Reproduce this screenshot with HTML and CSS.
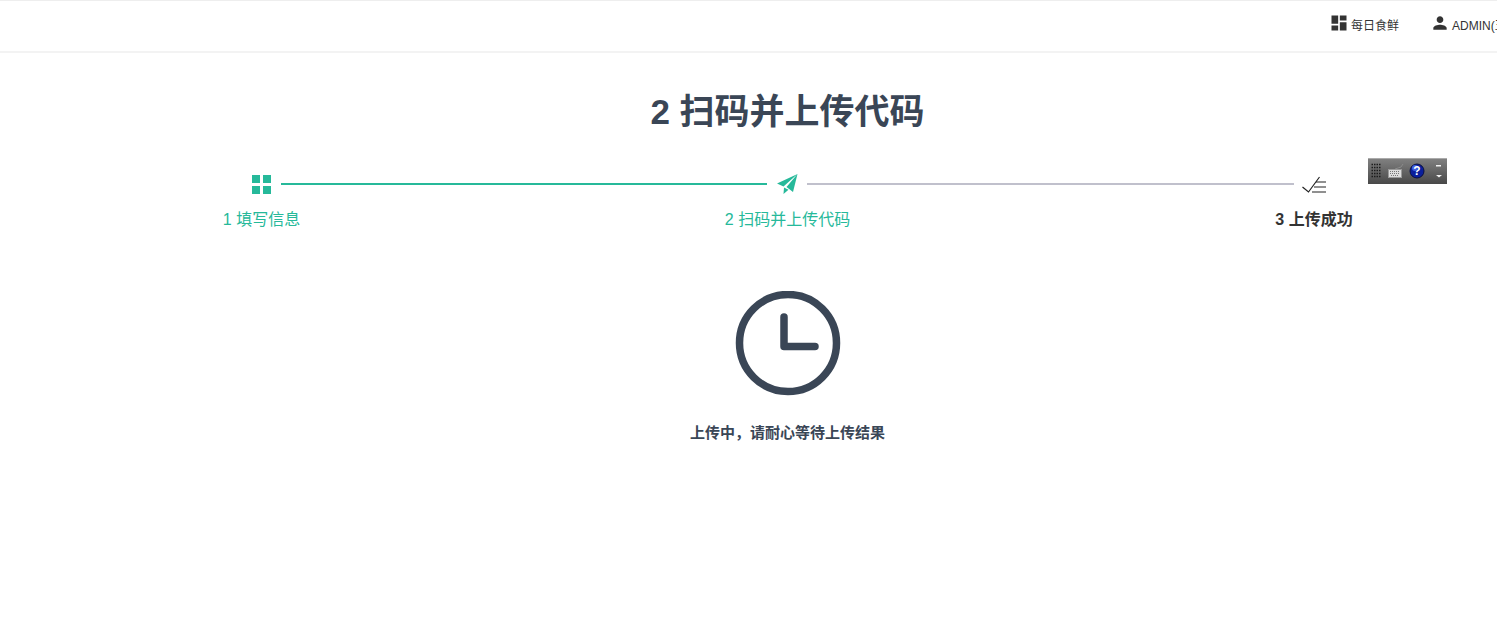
FILE: index.html

```html
<!DOCTYPE html>
<html lang="zh-CN">
<head>
    <meta charset="UTF-8">
    <title>扫码并上传代码</title>
    <link rel="stylesheet" href="styles.css">
</head>
<body>
    <!-- 顶部导航 -->
    <header class="topbar">
        <nav class="topbar-nav">
            <a class="nav-item nav-first">
                <svg class="nav-icon" viewBox="0 0 24 24"><path d="M3 13h8V3H3v10zm0 8h8v-6H3v6zm10 0h8V11h-8v10zm0-18v6h8V3h-8z"/></svg>
                <span>每日食鲜</span>
            </a>
            <a class="nav-item nav-user">
                <svg class="nav-icon" viewBox="0 0 24 24"><path d="M12 12c2.21 0 4-1.79 4-4s-1.79-4-4-4-4 1.79-4 4 1.79 4 4 4zm0 2c-2.67 0-8 1.34-8 4v2h16v-2c0-2.66-5.33-4-8-4z"/></svg>
                <span>ADMIN(王小明)</span>
            </a>
        </nav>
    </header>

    <main class="content">
        <h1 class="page-title">2 扫码并上传代码</h1>

        <!-- 步骤条 -->
        <div class="steps">
            <div class="step step-done">
                <div class="step-icon">
                    <svg class="icon-grid" width="19" height="19" viewBox="0 0 19 19"><path d="M0 0h8v8H0zM11 0h8v8h-8zM0 11h8v8H0zM11 11h8v8h-8z"/></svg>
                </div>
                <div class="step-label">1 填写信息</div>
            </div>
            <div class="step-line step-line-done"></div>
            <div class="step step-done">
                <div class="step-icon">
                    <svg width="21" height="20" viewBox="0 0 21 20"><path d="M20.5 0 0 9.500 6.500 12.500zM20.500 0 16 18 9.500 13zM7 13.500 6.500 20 11.500 15.800z"/></svg>
                </div>
                <div class="step-label">2 扫码并上传代码</div>
            </div>
            <div class="step-line"></div>
            <div class="step step-current">
                <div class="step-icon">
                    <svg class="icon-check" width="24" height="18" viewBox="0 0 24 18" fill="none" stroke="#222" stroke-width="1.200"><path d="M0.500 12 6.500 17 17.500 2"/><path d="M14 7h10M12 12h12M10 17h14"/></svg>
                </div>
                <div class="step-label">3 上传成功</div>
            </div>
        </div>

        <div class="upload-status">
            <svg class="clock" width="106" height="106" viewBox="0 0 106 106" fill="none" stroke="#3a4656" stroke-width="7.500" stroke-linecap="round" stroke-linejoin="round">
                <circle cx="53" cy="52" r="48.500"/>
                <path d="M49 26v29.500h31"/>
            </svg>
            <p class="status-text">上传中，请耐心等待上传结果</p>
        </div>
    </main>

    <!-- 浮动控件工具条 -->
    <div class="float-toolbar">
        <svg width="79" height="26" viewBox="0 0 79 26">
            <path d="M3.500 6.500h10M3.500 9.500h10M3.500 12.500h10M3.500 15.500h10M3.500 18.500h10" stroke="#1c1c1c" stroke-width="1.500" stroke-dasharray="1.500 1"/>
            <path d="M27 11 33 9l2-3" fill="none" stroke="#8a8a8a"/>
            <rect x="20.500" y="11.500" width="13" height="8" fill="#ddd" stroke="#999"/>
            <path d="M22 13.500h10M22 15.500h10M23 17.500h8" stroke="#777" stroke-dasharray="1 1"/>
            <circle cx="49" cy="13" r="7" fill="#0a1f9c" stroke="#0a1040"/>
            <circle cx="47" cy="10" r="3" fill="#3f5fe0"/>
            <text class="help-mark" x="49" y="17">?</text>
            <path d="M68 7h5v1.500h-5zM68 17h6l-3 2.500z" fill="#f2f2f2"/>
        </svg>
    </div>
</body>
</html>
```

FILE: styles.css

```css
* {
    margin: 0;
    padding: 0;
    box-sizing: border-box;
}

body {
    font-family: "Liberation Sans", "Noto Sans CJK SC", sans-serif;
    background: #fff;
    color: #333;
    overflow: hidden;
    height: 620px;
    position: relative;
}

/* 顶部导航 */
.topbar {
    height: 53px;
    border-top: 1px solid #eee;
    border-bottom: 2px solid #f3f3f3;
    display: flex;
    justify-content: flex-end;
}

.topbar-nav {
    width: 167px;
    display: flex;
    overflow: hidden;
    white-space: nowrap;
    padding-top: 12px;
}

.nav-item {
    display: flex;
    align-items: flex-start;
    font-size: 12px;
    color: #333;
    flex-shrink: 0;
}

.nav-item span {
    margin-top: 3px;
}

.nav-first {
    margin-right: 32px;
}

.nav-icon {
    width: 20px;
    height: 20px;
    fill: #333;
    margin-right: 2px;
    margin-left: -1px;
}

/* 主体内容，左边留出侧栏的宽度 */
.content {
    padding-left: 78px;
    display: flex;
    flex-direction: column;
    align-items: center;
}

.page-title {
    font-size: 35px;
    line-height: 40px;
    margin-top: 39px;
    font-weight: bold;
    color: #3a4656;
}

.steps {
    margin-top: 42px;
    display: flex;
    align-items: flex-start;
}

.step {
    width: 40px;
    display: flex;
    flex-direction: column;
    align-items: center;
}

.step-icon {
    height: 20px;
    display: flex;
    align-items: center;
    justify-content: center;
}

.step-icon svg {
    display: block;
}

.icon-grid {
    margin-left: 1px;
}

.icon-check {
    margin-left: -1px;
}

.step-label {
    margin-top: 16px;
    font-size: 16px;
    line-height: 20px;
    white-space: nowrap;
}

.step-done .step-icon svg {
    fill: #26b99a;
}

.step-done .step-label {
    color: #26b99a;
    margin-left: 1px;
}

.step-current .step-label {
    font-weight: bold;
    color: #333;
}

.step-line {
    width: 487px;
    height: 2px;
    margin-top: 9px;
    background: #c0c0cc;
}

.step-line-done {
    width: 486px;
    background: #26b99a;
}

.upload-status {
    margin-top: 61px;
    display: flex;
    flex-direction: column;
    align-items: center;
}

.clock {
    display: block;
    margin-left: 1px;
}

.status-text {
    margin-top: 26px;
    font-size: 15px;
    line-height: 20px;
    font-weight: bold;
    color: #3a4656;
}

/* 浮动控件工具条 */
.float-toolbar {
    position: absolute;
    left: 1368px;
    top: 158px;
    width: 79px;
    height: 26px;
    border-top: 1px solid #aaa;
    background: linear-gradient(#808080, #484848);
}

.float-toolbar svg {
    display: block;
    margin-top: -1px;
}

.help-mark {
    font-family: "Liberation Sans", sans-serif;
    font-size: 12px;
    font-weight: bold;
    fill: #fff;
    text-anchor: middle;
}
```
